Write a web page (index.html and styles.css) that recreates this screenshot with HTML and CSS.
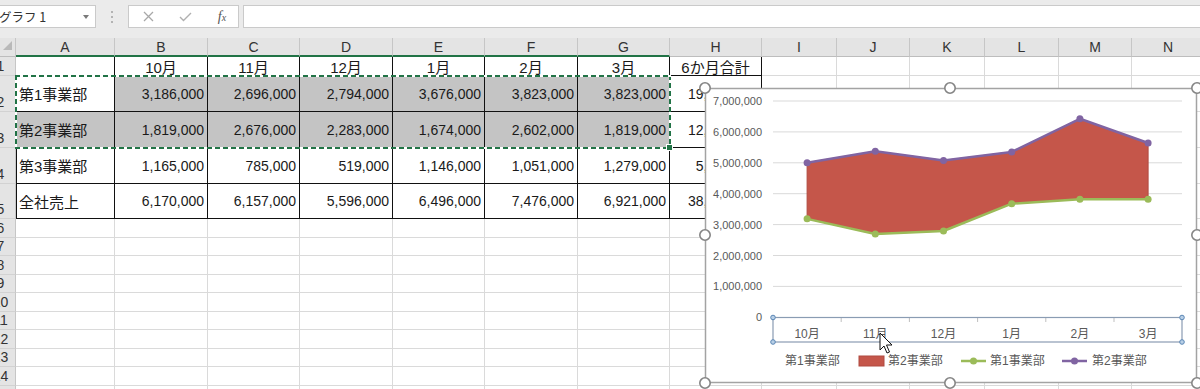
FILE: index.html
```html
<!DOCTYPE html>
<html lang="ja">
<head>
<meta charset="utf-8">
<title>Excel chart</title>
<link rel="stylesheet" href="styles.css">
</head>
<body>
<div class="app">
  <div class="fbar">
    <div class="namebox"><span class="nb-text">グラフ 1</span><span class="caret"></span></div>
    <div class="grip"><i></i><i></i><i></i></div>
    <div class="fxbox">
      <svg class="ico" width="11" height="11" viewBox="0 0 11 11"><path d="M1 1 L10 10 M10 1 L1 10" stroke="#a8a8a8" stroke-width="1.3" fill="none"/></svg>
      <svg class="ico" width="13" height="10" viewBox="0 0 13 10"><path d="M1 5 L4.5 8.5 L12 1" stroke="#b0b0b0" stroke-width="1.4" fill="none"/></svg>
      <span class="fx"><i>f</i><i class="fx-x">x</i></span>
    </div>
    <div class="finput"></div>
  </div>

  <div class="sheet">
    <div class="corner"><span class="tri"></span></div>
    <div class="ch s">A</div><div class="ch s">B</div><div class="ch s">C</div><div class="ch s">D</div><div class="ch s">E</div><div class="ch s">F</div><div class="ch s">G</div>
    <div class="ch">H</div><div class="ch">I</div><div class="ch">J</div><div class="ch">K</div><div class="ch">L</div><div class="ch">M</div><div class="ch">N</div>

    <div class="rh"><span>1</span></div>
    <div class="c t"></div>
    <div class="c t m">10月</div><div class="c t m">11月</div><div class="c t m">12月</div><div class="c t m">1月</div><div class="c t m">2月</div><div class="c t m">3月</div><div class="c t m">6か月合計</div>
    <div class="c"></div><div class="c"></div><div class="c"></div><div class="c"></div><div class="c"></div><div class="c"></div>

    <div class="rh"><span>2</span></div>
    <div class="c t l lb">第1事業部</div>
    <div class="c t g n">3,186,000</div><div class="c t g n">2,696,000</div><div class="c t g n">2,794,000</div><div class="c t g n">3,676,000</div><div class="c t g n">3,823,000</div><div class="c t g n">3,823,000</div>
    <div class="c t n">19,998,000</div>
    <div class="c"></div><div class="c"></div><div class="c"></div><div class="c"></div><div class="c"></div><div class="c"></div>

    <div class="rh"><span>3</span></div>
    <div class="c t l lb g">第2事業部</div>
    <div class="c t g n">1,819,000</div><div class="c t g n">2,676,000</div><div class="c t g n">2,283,000</div><div class="c t g n">1,674,000</div><div class="c t g n">2,602,000</div><div class="c t g n">1,819,000</div>
    <div class="c t n">12,873,000</div>
    <div class="c"></div><div class="c"></div><div class="c"></div><div class="c"></div><div class="c"></div><div class="c"></div>

    <div class="rh"><span>4</span></div>
    <div class="c t l lb">第3事業部</div>
    <div class="c t n">1,165,000</div><div class="c t n">785,000</div><div class="c t n">519,000</div><div class="c t n">1,146,000</div><div class="c t n">1,051,000</div><div class="c t n">1,279,000</div>
    <div class="c t n">5,945,000</div>
    <div class="c"></div><div class="c"></div><div class="c"></div><div class="c"></div><div class="c"></div><div class="c"></div>

    <div class="rh"><span>5</span></div>
    <div class="c t l lb">全社売上</div>
    <div class="c t n">6,170,000</div><div class="c t n">6,157,000</div><div class="c t n">5,596,000</div><div class="c t n">6,496,000</div><div class="c t n">7,476,000</div><div class="c t n">6,921,000</div>
    <div class="c t n">38,816,000</div>
    <div class="c"></div><div class="c"></div><div class="c"></div><div class="c"></div><div class="c"></div><div class="c"></div>

    <div class="rh"><span>6</span></div><div class="c"></div><div class="c"></div><div class="c"></div><div class="c"></div><div class="c"></div><div class="c"></div><div class="c"></div><div class="c"></div><div class="c"></div><div class="c"></div><div class="c"></div><div class="c"></div><div class="c"></div><div class="c"></div>
    <div class="rh"><span>7</span></div><div class="c"></div><div class="c"></div><div class="c"></div><div class="c"></div><div class="c"></div><div class="c"></div><div class="c"></div><div class="c"></div><div class="c"></div><div class="c"></div><div class="c"></div><div class="c"></div><div class="c"></div><div class="c"></div>
    <div class="rh"><span>8</span></div><div class="c"></div><div class="c"></div><div class="c"></div><div class="c"></div><div class="c"></div><div class="c"></div><div class="c"></div><div class="c"></div><div class="c"></div><div class="c"></div><div class="c"></div><div class="c"></div><div class="c"></div><div class="c"></div>
    <div class="rh"><span>9</span></div><div class="c"></div><div class="c"></div><div class="c"></div><div class="c"></div><div class="c"></div><div class="c"></div><div class="c"></div><div class="c"></div><div class="c"></div><div class="c"></div><div class="c"></div><div class="c"></div><div class="c"></div><div class="c"></div>
    <div class="rh"><span>10</span></div><div class="c"></div><div class="c"></div><div class="c"></div><div class="c"></div><div class="c"></div><div class="c"></div><div class="c"></div><div class="c"></div><div class="c"></div><div class="c"></div><div class="c"></div><div class="c"></div><div class="c"></div><div class="c"></div>
    <div class="rh"><span>11</span></div><div class="c"></div><div class="c"></div><div class="c"></div><div class="c"></div><div class="c"></div><div class="c"></div><div class="c"></div><div class="c"></div><div class="c"></div><div class="c"></div><div class="c"></div><div class="c"></div><div class="c"></div><div class="c"></div>
    <div class="rh"><span>12</span></div><div class="c"></div><div class="c"></div><div class="c"></div><div class="c"></div><div class="c"></div><div class="c"></div><div class="c"></div><div class="c"></div><div class="c"></div><div class="c"></div><div class="c"></div><div class="c"></div><div class="c"></div><div class="c"></div>
    <div class="rh"><span>13</span></div><div class="c"></div><div class="c"></div><div class="c"></div><div class="c"></div><div class="c"></div><div class="c"></div><div class="c"></div><div class="c"></div><div class="c"></div><div class="c"></div><div class="c"></div><div class="c"></div><div class="c"></div><div class="c"></div>
    <div class="rh"><span>14</span></div><div class="c"></div><div class="c"></div><div class="c"></div><div class="c"></div><div class="c"></div><div class="c"></div><div class="c"></div><div class="c"></div><div class="c"></div><div class="c"></div><div class="c"></div><div class="c"></div><div class="c"></div><div class="c"></div>
    <div class="rh"><span>15</span></div><div class="c"></div><div class="c"></div><div class="c"></div><div class="c"></div><div class="c"></div><div class="c"></div><div class="c"></div><div class="c"></div><div class="c"></div><div class="c"></div><div class="c"></div><div class="c"></div><div class="c"></div><div class="c"></div>

    <div class="ants"></div>
  </div>

  <svg class="chart" width="504" height="307" viewBox="-6 -6 504 307">
    <rect x="0.5" y="0.5" width="491" height="294" fill="#fff" stroke="#a3a3a3" stroke-width="1.5"/>
    <g stroke="#d9d9d9" stroke-width="1">
      <line x1="68" y1="13" x2="477" y2="13"/>
      <line x1="68" y1="43.9" x2="477" y2="43.9"/>
      <line x1="68" y1="74.8" x2="477" y2="74.8"/>
      <line x1="68" y1="105.7" x2="477" y2="105.7"/>
      <line x1="68" y1="136.6" x2="477" y2="136.6"/>
      <line x1="68" y1="167.5" x2="477" y2="167.5"/>
      <line x1="68" y1="198.4" x2="477" y2="198.4"/>
    </g>
    <g class="axis" text-anchor="end">
      <text x="57" y="17">7,000,000</text>
      <text x="57" y="48">6,000,000</text>
      <text x="57" y="79">5,000,000</text>
      <text x="57" y="110">4,000,000</text>
      <text x="57" y="141">3,000,000</text>
      <text x="57" y="172">2,000,000</text>
      <text x="57" y="202">1,000,000</text>
      <text x="57" y="233">0</text>
    </g>
    <polygon points="102.1,74.65 170.3,63.3 238.5,72.42 306.7,63.98 374.9,30.77 443.1,54.96 443.1,111.17 374.9,111.17 306.7,115.71 238.5,142.97 170.3,145.99 102.1,130.85" fill="#c5564a" stroke="#b04a40" stroke-width="1"/>
    <polyline points="102.1,130.85 170.3,145.99 238.5,142.97 306.7,115.71 374.9,111.17 443.1,111.17" fill="none" stroke="#9bbb59" stroke-width="2.5" stroke-linejoin="round"/>
    <g fill="#9bbb59">
      <circle cx="102.1" cy="130.85" r="3.5"/><circle cx="170.3" cy="145.99" r="3.5"/><circle cx="238.5" cy="142.97" r="3.5"/>
      <circle cx="306.7" cy="115.71" r="3.5"/><circle cx="374.9" cy="111.17" r="3.5"/><circle cx="443.1" cy="111.17" r="3.5"/>
    </g>
    <polyline points="102.1,74.65 170.3,63.3 238.5,72.42 306.7,63.98 374.9,30.77 443.1,54.96" fill="none" stroke="#8064a2" stroke-width="2.5" stroke-linejoin="round"/>
    <g fill="#8064a2">
      <circle cx="102.1" cy="74.65" r="3.5"/><circle cx="170.3" cy="63.3" r="3.5"/><circle cx="238.5" cy="72.42" r="3.5"/>
      <circle cx="306.7" cy="63.98" r="3.5"/><circle cx="374.9" cy="30.77" r="3.5"/><circle cx="443.1" cy="54.96" r="3.5"/>
    </g>
    <g stroke="#bfbfbf" stroke-width="1">
      <line x1="136.2" y1="229.5" x2="136.2" y2="234"/>
      <line x1="204.4" y1="229.5" x2="204.4" y2="234"/>
      <line x1="272.6" y1="229.5" x2="272.6" y2="234"/>
      <line x1="340.8" y1="229.5" x2="340.8" y2="234"/>
      <line x1="409" y1="229.5" x2="409" y2="234"/>
    </g>
    <rect x="68" y="229.5" width="409" height="24.5" fill="none" stroke="#8a9cb3" stroke-width="1.2"/>
    <g fill="#b8cfe6" stroke="#5a86b5" stroke-width="1">
      <circle cx="68" cy="229.5" r="2.3"/><circle cx="477" cy="229.5" r="2.3"/>
      <circle cx="68" cy="254" r="2.3"/><circle cx="477" cy="254" r="2.3"/>
    </g>
    <g class="cat" text-anchor="middle">
      <text x="102.1" y="250">10月</text>
      <text x="170.3" y="250">11月</text>
      <text x="238.5" y="250">12月</text>
      <text x="306.7" y="250">1月</text>
      <text x="374.9" y="250">2月</text>
      <text x="443.1" y="250">3月</text>
    </g>
    <g class="legend">
      <text x="80" y="277">第1事業部</text>
      <rect x="154" y="268" width="25" height="10" fill="#c5564a" stroke="#b04a40" stroke-width="1"/>
      <text x="183" y="277">第2事業部</text>
      <line x1="256" y1="273" x2="281" y2="273" stroke="#9bbb59" stroke-width="2.5"/>
      <circle cx="268.5" cy="273" r="3.5" fill="#9bbb59"/>
      <text x="285" y="277">第1事業部</text>
      <line x1="357" y1="273" x2="382" y2="273" stroke="#8064a2" stroke-width="2.5"/>
      <circle cx="369.5" cy="273" r="3.5" fill="#8064a2"/>
      <text x="387" y="277">第2事業部</text>
    </g>
    <path transform="translate(175 245)" d="M0 0 V17 L4 13 L7 20 L9.5 19 L6.5 12 H12 Z" fill="#fff" stroke="#111" stroke-width="1" stroke-linejoin="round"/>
    <g fill="#fff" stroke="#858585" stroke-width="1.6">
      <circle cx="0" cy="0" r="5.2"/><circle cx="245" cy="0" r="5.2"/><circle cx="492" cy="0" r="5.2"/>
      <circle cx="0" cy="147" r="5.2"/><circle cx="492" cy="147" r="5.2"/>
      <circle cx="0" cy="295" r="5.2"/><circle cx="245" cy="295" r="5.2"/><circle cx="492" cy="295" r="5.2"/>
    </g>
  </svg>
</div>
</body>
</html>
```

FILE: styles.css
```css
* { box-sizing: border-box; }
html, body { margin: 0; padding: 0; }
body {
  width: 1200px;
  height: 389px;
  overflow: hidden;
  background: #fff;
  font-family: "Liberation Sans", "Noto Sans CJK JP", sans-serif;
  color: #1a1a1a;
}
.app { position: relative; width: 1200px; height: 389px; overflow: hidden; }

/* formula bar */
.fbar {
  height: 38px;
  background: #ebebeb;
  display: flex;
  align-items: flex-start;
  padding-top: 5px;
}
.namebox {
  width: 96px;
  height: 23px;
  flex: none;
  background: #fff;
  border: 1px solid #cacaca;
  border-left: 0;
  display: flex;
  align-items: center;
  justify-content: space-between;
  padding-right: 6px;
  font-family: "Noto Sans CJK JP", sans-serif;
  font-size: 12.5px;
  color: #333;
}
.nb-text { margin-left: -1px; }
.caret {
  width: 0; height: 0;
  border-left: 3.5px solid transparent;
  border-right: 3.5px solid transparent;
  border-top: 4px solid #7a7a7a;
}
.grip {
  width: 32px;
  height: 23px;
  flex: none;
  display: flex;
  flex-direction: column;
  align-items: center;
  justify-content: center;
  gap: 3px;
}
.grip i { display: block; width: 2px; height: 2px; background: #b3b3b3; }
.fxbox {
  width: 111px;
  height: 23px;
  flex: none;
  background: #fff;
  border: 1px solid #cacaca;
  display: grid;
  grid-template-columns: 38px 37px 36px;
  align-items: center;
  justify-items: center;
}
.ico { display: block; }
.fx {
  font-family: "Liberation Serif", serif;
  font-style: italic;
  color: #555;
  font-size: 14px;
  line-height: 1;
}
.fx i { font-style: italic; }
.fx-x { font-size: 10px; }
.finput {
  flex: 1;
  margin-left: 4px;
  height: 23px;
  background: #fff;
  border: 1px solid #cacaca;
  border-right: 0;
}

/* sheet */
.sheet {
  position: relative;
  display: grid;
  grid-template-columns: 16px 99px 93px 92px 93px 92px 93px 92px 92px 75px 73px 75px 74px 73px 73px;
  grid-template-rows: 19px 19px 36px 36px 36px 35px repeat(10, 18.5px);
  width: 1205px;
}
.corner {
  background: #e4e4e4;
  border-right: 1px solid #c6c6c6;
  border-bottom: 1px solid #bdbdbd;
  display: flex;
  align-items: flex-end;
  justify-content: flex-end;
  padding: 0 3px 6px 0;
}
.tri {
  width: 0; height: 0;
  border-left: 9px solid transparent;
  border-bottom: 9px solid #b9b9b9;
}
.ch {
  background: #e4e4e4;
  border-right: 1px solid #c6c6c6;
  border-bottom: 1px solid #bdbdbd;
  display: flex;
  align-items: center;
  justify-content: center;
  font-size: 14px;
  color: #333;
}
.ch.s { border-bottom: 2px solid #217346; }
.rh {
  background: #e4e4e4;
  border-right: 1px solid #c6c6c6;
  border-bottom: 1px solid #d2d2d2;
  overflow: hidden;
  display: flex;
  align-items: flex-end;
  font-size: 14px;
  color: #333;
}
.rh span {
  flex: none;
  width: 33px;
  margin-left: -16px;
  text-align: center;
  line-height: 17px;
}
.c {
  border-right: 1px solid #dadada;
  border-bottom: 1px solid #dadada;
  display: flex;
  align-items: center;
  font-size: 14px;
  white-space: nowrap;
  overflow: hidden;
}
.t { border-right-color: #111; border-bottom-color: #111; }
.l { box-shadow: inset 1px 0 #111; }
.g { background: #c4c4c4; }
.n { justify-content: flex-end; padding-right: 3px; }
.m { justify-content: center; font-size: 15px; }
.lb { padding-left: 3px; font-size: 15px; }

.ants {
  position: absolute;
  grid-column: 2 / 9;
  grid-row: 3 / 5;
  top: -1px; left: -1px; right: -1px; bottom: -1px;
  pointer-events: none;
  background:
    repeating-linear-gradient(90deg, #217346 0 5px, #fff 5px 8px) top left / 100% 2px no-repeat,
    repeating-linear-gradient(90deg, #217346 0 5px, #fff 5px 8px) bottom left / 100% 2px no-repeat,
    repeating-linear-gradient(180deg, #217346 0 5px, #fff 5px 8px) top left / 2px 100% no-repeat,
    repeating-linear-gradient(180deg, #217346 0 5px, #fff 5px 8px) top right / 2px 100% no-repeat;
}
.ants::after {
  content: "";
  position: absolute;
  right: -2px;
  bottom: -2px;
  width: 5px;
  height: 5px;
  background: #217346;
  border: 1px solid #fff;
}

/* chart */
.chart {
  position: absolute;
  left: 699px;
  top: 82px;
  overflow: visible;
  font-family: "Liberation Sans", "Noto Sans CJK JP", sans-serif;
}
.axis text { font-size: 11px; fill: #595959; }
.cat text { font-size: 12px; fill: #595959; }
.legend text { font-size: 12px; fill: #595959; }
```
